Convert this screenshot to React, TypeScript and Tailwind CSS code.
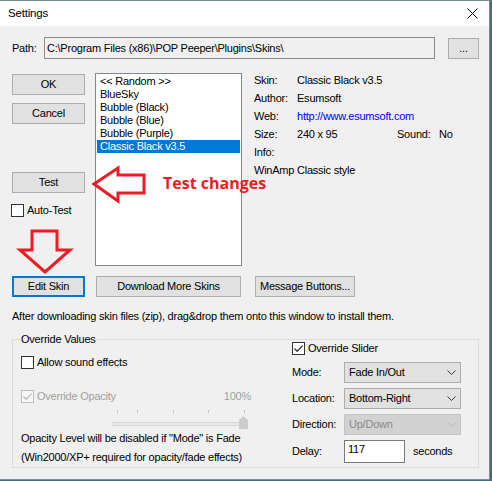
import React from "react";

function Btn({ className = "", focused = false, children }: { className?: string; focused?: boolean; children: React.ReactNode }) {
  return (
    <div
      className={`flex h-[21px] shrink-0 items-center justify-center bg-[#e1e1e1] ${
        focused ? "border-2 border-[#0078d7]" : "border border-[#adadad]"
      } ${className}`}
    >
      {children}
    </div>
  );
}

function Check({ checked = false, disabled = false }: { checked?: boolean; disabled?: boolean }) {
  return (
    <span
      className={`flex h-[13px] w-[13px] shrink-0 items-center justify-center border ${
        disabled ? "border-[#bcbcbc] bg-[#f7f7f7]" : "border-[#333333] bg-white"
      }`}
    >
      {checked && (
        <svg width="11" height="11" viewBox="0 0 11 11">
          <path d="M1.5 5.5 L4.2 8.2 L9.6 2.6" fill="none" stroke={disabled ? "#bcbcbc" : "#333333"} strokeWidth="1.3" />
        </svg>
      )}
    </span>
  );
}

function Chevron({ disabled = false }: { disabled?: boolean }) {
  return (
    <svg width="9" height="5" viewBox="0 0 9 5">
      <path d="M0.5 0.5 L4.5 4.5 L8.5 0.5" fill="none" stroke={disabled ? "#b5b5b5" : "#3a3a3a"} strokeWidth="1" />
    </svg>
  );
}

function Select({ value, disabled = false }: { value: string; disabled?: boolean }) {
  return (
    <div
      className={`flex h-[21px] w-[117px] items-center justify-between border pl-[4px] pr-[4px] ${
        disabled ? "border-[#c4c4c4] bg-[#d2d2d2] text-[#8a8a8a]" : "border-[#adadad] bg-[#e1e1e1] text-black"
      }`}
    >
      <span>{value}</span>
      <Chevron disabled={disabled} />
    </div>
  );
}

export default function App() {
  const items = ["<< Random >>", "BlueSky", "Bubble (Black)", "Bubble (Blue)", "Bubble (Purple)", "Classic Black v3.5"];
  return (
    <div className="relative h-[481px] w-[492px] overflow-hidden bg-[#3f6f7a] font-['Liberation_Sans',Arial,sans-serif] text-[11px] leading-[13px] tracking-[-0.23px] text-black">
      <div className="flex h-[480px] w-[490px] flex-col border-b border-r border-t border-[#7d8d96] bg-[#f0f0f0]">
        {/* Title bar */}
        <div className="flex h-[25px] shrink-0 items-center justify-between bg-white pl-[8px] pr-[11px]">
          <span className="text-[11.5px] tracking-[-0.2px]">Settings</span>
          <svg width="11" height="11" viewBox="0 0 11 11">
            <path d="M0.5 0.5 L10.5 10.5 M10.5 0.5 L0.5 10.5" stroke="#000" strokeWidth="1" />
          </svg>
        </div>

        <div className="flex flex-col pl-[12px]">
          {/* Path row */}
          <div className="mt-[11px] flex items-start">
            <div className="flex h-[22px] w-[32px] items-center">Path:</div>
            <div className="flex h-[22px] w-[391px] items-center border border-[#8c8c8c] bg-[#f0f0f0] pl-[2px]">
              C:\Program Files (x86)\POP Peeper\Plugins\Skins\
            </div>
            <Btn className="ml-[13px] mt-[1px] w-[31px]">...</Btn>
          </div>

          {/* Main */}
          <div className="mt-[14px] flex items-start">
            <div className="flex w-[73px] flex-col">
              <Btn className="mt-[1px] w-[73px]">OK</Btn>
              <Btn className="mt-[8px] w-[73px]">Cancel</Btn>
              <Btn className="mt-[48px] w-[73px]">Test</Btn>
              <div className="ml-[-1px] mt-[11px] flex h-[13px] items-center">
                <Check />
                <span className="ml-[3px]">Auto-Test</span>
              </div>
            </div>

            <div className="ml-[10px] flex h-[193px] w-[147px] flex-col border border-[#828790] bg-white px-[1px] pt-[1px]">
              {items.map((it, i) => (
                <div
                  key={it}
                  className={`h-[13px] pl-[3px] leading-[13px] ${i === items.length - 1 ? "bg-[#0078d7] text-white" : ""}`}
                >
                  {it}
                </div>
              ))}
            </div>

            <div className="ml-[12px] mt-[-2px] flex flex-col leading-[18px]">
              <div className="flex">
                <span className="w-[43px]">Skin:</span>
                <span>Classic Black v3.5</span>
              </div>
              <div className="flex">
                <span className="w-[43px]">Author:</span>
                <span>Esumsoft</span>
              </div>
              <div className="flex">
                <span className="w-[43px]">Web:</span>
                <span className="text-[#0000ff]">http://www.esumsoft.com</span>
              </div>
              <div className="flex">
                <span className="w-[43px]">Size:</span>
                <span className="w-[100px]">240 x 95</span>
                <span className="w-[42px]">Sound:</span>
                <span>No</span>
              </div>
              <div className="flex">
                <span className="w-[43px]">Info:</span>
              </div>
              <div>WinAmp Classic style</div>
            </div>
          </div>

          {/* Button row */}
          <div className="mt-[10px] flex">
            <Btn focused className="w-[73px]">Edit Skin</Btn>
            <Btn className="ml-[11px] w-[145px]">Download More Skins</Btn>
            <Btn className="ml-[14px] w-[100px]">Message Buttons...</Btn>
          </div>

          <div className="mt-[13px] leading-[13px]">
            After downloading skin files (zip), drag&amp;drop them onto this window to install them.
          </div>

          {/* Group box */}
          <div className="relative mt-[16px] flex h-[129px] w-[467px] border border-[#dcdcdc]">
            <span className="absolute left-[7px] top-[-7px] bg-[#f0f0f0] px-[1px] leading-[13px]">Override Values</span>

            <div className="ml-[8px] flex w-[230px] flex-col">
              <div className="mt-[16px] flex h-[13px] items-center">
                <Check />
                <span className="ml-[3px]">Allow sound effects</span>
              </div>
              <div className="mt-[21px] flex h-[13px] items-center justify-between text-[#a0a0a0]">
                <div className="flex items-center">
                  <Check checked disabled />
                  <span className="ml-[3px]">Override Opacity</span>
                </div>
                <span>100%</span>
              </div>
              <svg className="ml-[89px] mt-[7px]" width="140" height="20" viewBox="0 0 140 20">
                {[7, 27, 63, 98, 134].map((x) => (
                  <rect key={x} x={x} y="0" width="1" height="3" fill="#c4c4c4" />
                ))}
                <rect x="2.5" y="12.5" width="133" height="3" fill="#e7e7e7" stroke="#d6d6d6" />
                <path d="M129 10 L133.5 6 L138 10 L138 19 L129 19 Z" fill="#cccccc" />
              </svg>
              <div className="mt-[2px] whitespace-nowrap">Opacity Level will be disabled if "Mode" is Fade</div>
              <div className="mt-[6px] whitespace-nowrap">(Win2000/XP+ required for opacity/fade effects)</div>
            </div>

            <div className="ml-[41px] flex flex-col">
              <div className="mt-[2px] flex h-[13px] items-center">
                <Check checked />
                <span className="ml-[3px]">Override Slider</span>
              </div>
              <div className="mt-[7px] flex items-center">
                <span className="w-[52px]">Mode:</span>
                <Select value="Fade In/Out" />
              </div>
              <div className="mt-[5px] flex items-center">
                <span className="w-[52px]">Location:</span>
                <Select value="Bottom-Right" />
              </div>
              <div className="mt-[5px] flex items-center">
                <span className="w-[52px]">Direction:</span>
                <Select value="Up/Down" disabled />
              </div>
              <div className="mt-[5px] flex items-center">
                <span className="w-[52px]">Delay:</span>
                <div className="flex h-[23px] w-[61px] items-start border border-[#7a7a7a] bg-white pl-[3px] pt-[2px]">117</div>
                <span className="ml-[8px]">seconds</span>
              </div>
            </div>
          </div>
        </div>
      </div>

      {/* Annotations */}
      <svg className="pointer-events-none absolute left-0 top-0" width="492" height="481" viewBox="0 0 492 481">
        <polygon
          points="94,184 118,168 118,175 144,175 144,193 118,193 118,201"
          fill="none"
          stroke="#ed1c24"
          strokeWidth="3"
        />
        <polygon
          points="32,231 57,231 57,250 70,250 45,272 20,250 32,250"
          fill="none"
          stroke="#ed1c24"
          strokeWidth="3"
        />
      </svg>
      <span className="absolute left-[163px] top-[173px] font-['Open_Sans',sans-serif] text-[16px] font-bold leading-[20px] tracking-normal text-[#ed1c24]">
        Test changes
      </span>
    </div>
  );
}
